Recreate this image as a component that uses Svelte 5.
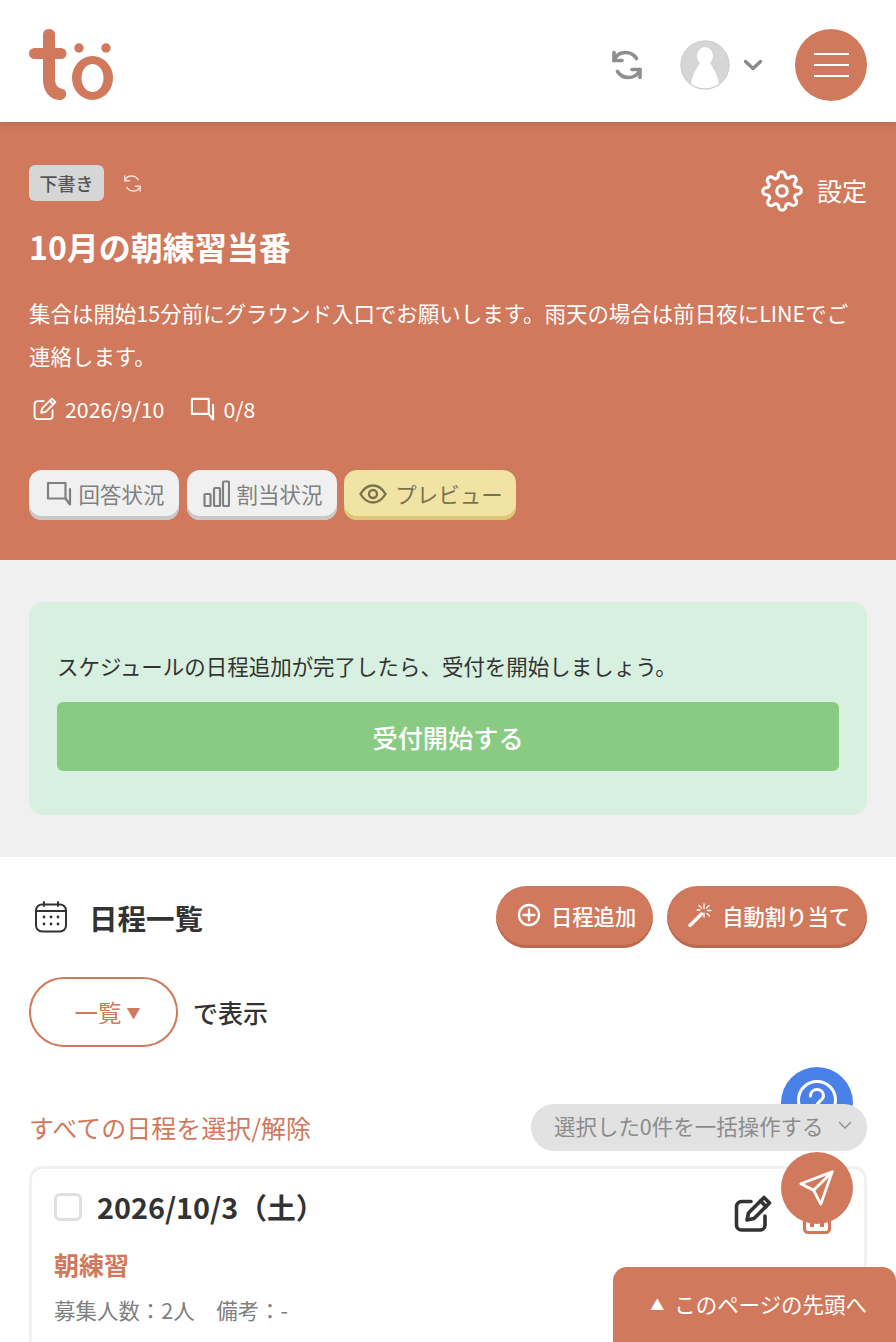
<script>
  const stats = [
    { label: '回答状況', icon: 'chat', kind: '' },
    { label: '割当状況', icon: 'bars', kind: '' },
    { label: 'プレビュー', icon: 'eye', kind: 'yellow' },
  ];
</script>

{#snippet syncIcon(size, color, sw)}
  <svg width={size} height={size} viewBox="0 0 32 32" fill="none" stroke={color} stroke-width={sw} stroke-linecap="round" stroke-linejoin="round">
    <path d="M3 11.5C5 6 9.5 3.5 14.5 3.5c4.5 0 8.5 2 11 6" />
    <path d="M3 3.5v8h8" />
    <path d="M29 20.5C27 26 22.5 28.5 17.5 28.5c-4.5 0-8.5-2-11-6" />
    <path d="M29 28.5v-8h-8" />
  </svg>
{/snippet}

{#snippet chatIcon(size, color)}
  <svg width={size} height={size} viewBox="0 0 26 26" fill="none" stroke={color} stroke-width="2.2" stroke-linejoin="round" stroke-linecap="round">
    <path d="M2 2h17.5v15.5H2z" />
    <path d="M24 8v15.5l-4.5-6" />
  </svg>
{/snippet}

{#snippet editIcon(size, color, sw)}
  <svg width={size} height={size} viewBox="0 0 38 38" fill="none" stroke={color} stroke-width={sw} stroke-linecap="round" stroke-linejoin="round">
    <path d="M17 6.5H7.5a5 5 0 0 0-5 5V30a5 5 0 0 0 5 5H26a5 5 0 0 0 5-5V21" />
    <path d="M13 25l1.5-7L30 2.5l5.5 5.5L20 23.5z" />
    <path d="M26.5 6l5.5 5.5" />
  </svg>
{/snippet}

<div class="page">
  <header class="topbar">
    <svg class="logo" width="86" height="74" viewBox="0 0 86 74">
      <g fill="#d0795c">
        <path d="M20 0a6 5 0 0 1 6 5v14h6a5.5 5.5 0 0 1 0 11h-6v20c0 6 3 9 7.5 10 3 .7 4 3 3.5 6-.6 3.5-3 5-6.5 5C21 71 14 62 14 51V30H5.5a5.5 5.5 0 0 1 0-11H14V5a6 5 0 0 1 6-5z" />
        <circle cx="50" cy="19" r="4.7" />
        <circle cx="77" cy="19" r="4.7" />
        <path fill-rule="evenodd" d="M63.5 27a20.5 22 0 1 1 0 44 20.5 22 0 1 1 0-44zm0 8a11 14 0 1 0 0 28 11 14 0 1 0 0-28z" />
      </g>
    </svg>
    <div class="top-actions">
      <span class="top-sync">{@render syncIcon(32, '#8e8e8e', 3.6)}</span>
      <div class="avatar">
        <svg width="50" height="50" viewBox="0 0 50 50">
          <circle cx="25" cy="25" r="24.5" fill="#d6d6d6" />
          <ellipse cx="25" cy="16" rx="8" ry="9" fill="#fff" />
          <path d="M20 23c-3 5-8 12-9 21 4 3 9 4.5 14 4.5S35 47 39 44c-1-9-6-16-9-21z" fill="#fff" />
          <circle cx="25" cy="25" r="24" fill="none" stroke="#cdcdcd" />
        </svg>
      </div>
      <svg class="caret" width="20" height="14" viewBox="0 0 20 14" fill="none" stroke="#8a8a8a" stroke-width="3.4" stroke-linecap="round" stroke-linejoin="round">
        <path d="M2.5 3.5l7.5 7 7.5-7" />
      </svg>
      <button class="menu" aria-label="メニュー">
        <span></span><span></span><span></span>
      </button>
    </div>
  </header>

  <section class="hero">
    <div class="hero-head">
      <div class="status">
        <span class="badge">下書き</span>
        {@render syncIcon(19, '#fbdcd0', 2.6)}
      </div>
      <div class="settings">
        <svg width="42" height="42" viewBox="0 0 24 24" fill="none" stroke="#fff" stroke-width="1.8" stroke-linecap="round" stroke-linejoin="round">
          <circle cx="12" cy="12" r="3" />
          <path d="M19.4 15a1.65 1.65 0 0 0 .33 1.82l.06.06a2 2 0 0 1-2.83 2.83l-.06-.06a1.65 1.65 0 0 0-2.8 1.17V21a2 2 0 0 1-4 0v-.09a1.65 1.65 0 0 0-2.8-1.11l-.06.06a2 2 0 0 1-2.83-2.83l.06-.06a1.65 1.65 0 0 0-1.17-2.8H3a2 2 0 0 1 0-4h.09a1.65 1.65 0 0 0 1.11-2.8l-.06-.06a2 2 0 0 1 2.83-2.83l.06.06a1.65 1.65 0 0 0 2.8-1.17V3a2 2 0 0 1 4 0v.09a1.65 1.65 0 0 0 2.8 1.11l.06-.06a2 2 0 0 1 2.83 2.83l-.06.06a1.65 1.65 0 0 0 1.17 2.8H21a2 2 0 0 1 0 4h-.09a1.65 1.65 0 0 0-1.51 1.17z" />
        </svg>
        <span>設定</span>
      </div>
    </div>
    <h1>10月の朝練習当番</h1>
    <p class="lead">集合は開始15分前にグラウンド入口でお願いします。雨天の場合は前日夜にLINEでご連絡します。</p>
    <div class="meta">
      <span class="meta-item">{@render editIcon(24, '#fff', 3)}2026/9/10</span>
      <span class="meta-item">{@render chatIcon(25, '#fff')}0/8</span>
    </div>
    <div class="tabs">
      {#each stats as s}
        <button class="tab {s.kind}">
          {#if s.icon === 'chat'}
            {@render chatIcon(26, '#808080')}
          {:else if s.icon === 'bars'}
            <svg width="27" height="27" viewBox="0 0 27 27" fill="none" stroke="#808080" stroke-width="2.2" stroke-linejoin="round">
              <rect x="1.5" y="14" width="6" height="12" rx="1" />
              <rect x="11" y="8" width="6" height="18" rx="1" />
              <rect x="20" y="1.5" width="6" height="24.5" rx="1" />
            </svg>
          {:else}
            <svg width="28" height="22" viewBox="0 0 28 22" fill="none" stroke="#7a7350" stroke-width="2.4">
              <path d="M1.5 11C5 5 9 2.5 14 2.5S23 5 26.5 11C23 17 19 19.5 14 19.5S5 17 1.5 11z" />
              <circle cx="14" cy="11" r="4" />
            </svg>
          {/if}
          <span>{s.label}</span>
        </button>
      {/each}
    </div>
  </section>

  <section class="notice-wrap">
    <div class="notice">
      <p>スケジュールの日程追加が完了したら、受付を開始しましょう。</p>
      <button class="start">受付開始する</button>
    </div>
  </section>

  <section class="schedule">
    <div class="schedule-head">
      <h2>
        <svg width="34" height="34" viewBox="0 0 34 34" fill="none" stroke="#333" stroke-width="2" stroke-linecap="round">
          <rect x="2" y="4.5" width="30" height="27" rx="6" />
          <path d="M2 11h30M10 2v4M24 2v4" />
          <g fill="#333" stroke="none">
            <circle cx="10" cy="17" r="1.4" /><circle cx="17" cy="17" r="1.4" /><circle cx="24" cy="17" r="1.4" />
            <circle cx="10" cy="24" r="1.4" /><circle cx="17" cy="24" r="1.4" /><circle cx="24" cy="24" r="1.4" />
          </g>
        </svg>
        <span>日程一覧</span>
      </h2>
      <div class="head-actions">
        <button class="pill">
          <svg width="24" height="24" viewBox="0 0 24 24" fill="none" stroke="#fff" stroke-width="2.3" stroke-linecap="round">
            <circle cx="12" cy="12" r="10" /><path d="M12 6.5v11M6.5 12h11" />
          </svg>
          日程追加
        </button>
        <button class="pill">
          <svg width="24" height="24" viewBox="0 0 24 24" fill="none" stroke="#fff" stroke-linecap="round">
            <path d="M2 22.5L13.5 11" stroke-width="3.4" />
            <path d="M16 1v4.5M16 10v4M9 7l3 0M19.5 7.5h3.5M11 2.5l2.5 2.5M21 2.5l-2.5 2.5M19 10.5l2.5 2.5" stroke-width="1.3" />
          </svg>
          自動割り当て
        </button>
      </div>
    </div>

    <div class="view-row">
      <div class="view-select">一覧<span class="tri">▼</span></div>
      <span class="view-label">で表示</span>
    </div>

    <div class="select-row">
      <span class="select-all">すべての日程を選択/解除</span>
      <button class="bulk">
        選択した0件を一括操作する
        <svg width="14" height="9" viewBox="0 0 14 9" fill="none" stroke="#8c8c8c" stroke-width="1.3" stroke-linecap="round">
          <path d="M1.5 1.5L7 7l5.5-5.5" />
        </svg>
      </button>
    </div>

    <article class="day">
      <div class="day-head">
        <span class="check"></span>
        <strong>2026/10/3（土）</strong>
        <span class="day-actions">
          {@render editIcon(38, '#333', 3.6)}
          <svg width="30" height="40" viewBox="0 0 30 40" fill="none" stroke="#d0795c" stroke-width="3.2" stroke-linejoin="round">
            <path d="M1.5 8h27M2.5 8v27a3.5 3.5 0 0 0 3.5 3.5h18a3.5 3.5 0 0 0 3.5-3.5V8" />
            <path d="M10 14v19M20 14v19" stroke-width="4" />
          </svg>
        </span>
      </div>
      <div class="day-name">朝練習</div>
      <div class="day-info">募集人数：2人　備考：-</div>
    </article>
  </section>

  <button class="float help" aria-label="ヘルプ">
    <svg width="42" height="42" viewBox="0 0 42 42" fill="none" stroke="#fff" stroke-width="3" stroke-linecap="round">
      <circle cx="21" cy="21" r="18.5" />
      <path d="M14.5 17c0-4 3-6.5 6.5-6.5s6.5 2.5 6.5 6c0 5.500-6.500 5.500-6.500 10.500" />
    </svg>
  </button>
  <button class="bulk-layer" tabindex="-1">
    選択した0件を一括操作する
    <svg width="14" height="9" viewBox="0 0 14 9" fill="none" stroke="#8c8c8c" stroke-width="1.3" stroke-linecap="round">
      <path d="M1.5 1.5L7 7l5.5-5.5" />
    </svg>
  </button>
  <button class="float send" aria-label="送信">
    <svg width="36" height="36" viewBox="0 0 38 38" fill="none" stroke="#fff" stroke-width="3" stroke-linejoin="round" stroke-linecap="round">
      <path d="M35 2L2 14.5l13.5 7L23 36z" />
      <path d="M35 2L15.5 21.5" />
    </svg>
  </button>
  <button class="to-top"><span class="up">▲</span>このページの先頭へ</button>
</div>

<style>
  :global(body) {
    margin: 0;
    background: #fff;
  }

  .page {
    position: relative;
    height: 1342px;
    overflow: hidden;
    color: #333;
    font-family: "Noto Sans CJK JP", "Noto Sans", sans-serif;
  }

  button {
    font-family: inherit;
    border: 0;
    margin: 0;
    padding: 0;
  }

  h1, h2, p {
    margin: 0;
  }

  .topbar {
    height: 122px;
    box-sizing: border-box;
    padding: 0 29px;
    display: flex;
    align-items: center;
    justify-content: space-between;
    background: #fff;
    position: relative;
    box-shadow: 0 2px 6px rgba(90, 50, 30, 0.22);
    z-index: 1;
  }

  .logo {
    margin-top: 10px;
  }

  .top-actions {
    display: flex;
    align-items: center;
    margin-top: 8px;
  }

  .top-sync {
    display: flex;
    margin-right: 37px;
  }

  .avatar {
    display: flex;
    margin-right: 13px;
  }

  .caret {
    margin-right: 32px;
  }

  .menu {
    width: 72px;
    height: 72px;
    border-radius: 50%;
    background: #d0795c;
    display: flex;
    flex-direction: column;
    align-items: center;
    justify-content: center;
    gap: 9px;
  }

  .menu span {
    display: block;
    width: 35px;
    height: 2px;
    background: #fff;
  }

  .hero {
    height: 438px;
    box-sizing: border-box;
    padding: 43px 29px 0;
    background: #d0795c;
    color: #fff;
  }

  .hero-head {
    display: flex;
    justify-content: space-between;
    align-items: flex-start;
  }

  .status {
    display: flex;
    align-items: center;
    gap: 19px;
  }

  .badge {
    width: 75px;
    height: 36px;
    display: flex;
    align-items: center;
    justify-content: center;
    border-radius: 6px;
    background: #d6d6d6;
    color: #555;
    font-size: 18px;
    font-weight: 500;
  }

  .settings {
    display: flex;
    align-items: center;
    gap: 14px;
    font-size: 25px;
    margin-top: 3px;
  }

  .settings svg {
    margin-top: 2px;
    margin-left: -1px;
  }

  h1 {
    margin-top: 12px;
    font-size: 32px;
    line-height: 44px;
    font-weight: 700;
  }

  .lead {
    margin-top: 23px;
    font-size: 21.47px;
    line-height: 43px;
  }

  .meta {
    display: flex;
    gap: 26px;
    margin-top: 16px;
    margin-left: 4px;
    font-size: 21.3px;
    line-height: 32px;
  }

  .meta-item {
    display: flex;
    align-items: center;
    gap: 8px;
  }

  .tabs {
    display: flex;
    gap: 7.5px;
    margin-top: 45px;
  }

  .tab {
    height: 50px;
    width: 150px;
    box-sizing: border-box;
    padding: 0 0 3px 2px;
    display: flex;
    align-items: center;
    justify-content: center;
    gap: 7px;
    border-radius: 13px;
    background: #f0f0f0;
    box-shadow: inset 0 -4px 0 #c8c8c8;
    color: #808080;
    font-size: 21.47px;
  }

  .tab.yellow {
    width: 172px;
    gap: 8px;
    background: #f1e3a4;
    box-shadow: inset 0 -4px 0 #dcc778;
    color: #7a7350;
  }

  .notice-wrap {
    height: 297px;
    box-sizing: border-box;
    padding: 42px 29px 0;
    background: #f0f0f0;
  }

  .notice {
    height: 213px;
    box-sizing: border-box;
    padding: 44px 28px 0;
    border-radius: 14px;
    background: #d8f0df;
  }

  .notice p {
    font-size: 21.47px;
    line-height: 40px;
    color: #333;
  }

  .start {
    display: block;
    width: 100%;
    height: 69px;
    margin-top: 16px;
    border-radius: 6px;
    background: #89cb83;
    color: #fff;
    font-size: 25.2px;
    font-weight: 500;
  }

  .schedule {
    padding: 29px 29px 0;
    background: #fff;
  }

  .schedule-head {
    display: flex;
    justify-content: space-between;
    align-items: center;
    height: 62px;
  }

  h2 {
    display: flex;
    align-items: center;
    gap: 21px;
    padding-left: 5px;
    font-size: 28.5px;
    font-weight: 700;
  }

  .head-actions {
    display: flex;
    gap: 14px;
  }

  .pill {
    height: 62px;
    padding: 0 17px 4px 21px;
    box-sizing: border-box;
    display: flex;
    align-items: center;
    gap: 10px;
    border-radius: 31px;
    background: #d0795c;
    box-shadow: inset 0 -3px 0 #bc6a4e;
    color: #fff;
    font-size: 21.3px;
    font-weight: 500;
  }

  .view-row {
    display: flex;
    align-items: center;
    gap: 15px;
    margin-top: 29px;
  }

  .view-select {
    width: 149px;
    height: 70px;
    box-sizing: border-box;
    padding-left: 8px;
    display: flex;
    align-items: center;
    justify-content: center;
    gap: 5px;
    border: 2px solid #d0795c;
    border-radius: 35px;
    color: #d0795c;
    font-size: 23.5px;
  }

  .tri {
    font-size: 14px;
  }

  .view-label {
    font-size: 25px;
    font-weight: 500;
  }

  .select-row {
    display: flex;
    justify-content: space-between;
    align-items: center;
    margin-top: 58px;
    height: 46px;
  }

  .select-all {
    color: #d0795c;
    font-size: 25px;
    padding-bottom: 3px;
  }

  .bulk, .bulk-layer {
    width: 336px;
    height: 46px;
    box-sizing: border-box;
    padding: 0 0 3px 23px;
    display: flex;
    align-items: center;
    gap: 14px;
    border-radius: 23px;
    background: #e2e2e2;
    color: #8c8c8c;
    font-size: 21.47px;
  }

  .bulk-layer {
    position: absolute;
    top: 1104px;
    left: 531px;
    z-index: 3;
  }

  .day {
    margin-top: 15px;
    height: 240px;
    box-sizing: border-box;
    padding: 16px 22px;
    border: 3px solid #f0f0f0;
    border-radius: 14px;
  }

  .day-head {
    display: flex;
    align-items: center;
    height: 44px;
  }

  .check {
    width: 28px;
    height: 28px;
    box-sizing: border-box;
    border: 3px solid #e0e0e0;
    border-radius: 6px;
    margin-right: 15px;
  }

  .day-head strong {
    font-size: 28.8px;
    font-weight: 700;
    padding-bottom: 2px;
  }

  .day-actions {
    margin-left: auto;
    margin-right: 10px;
    display: flex;
    align-items: center;
    gap: 30px;
    padding-top: 14px;
  }

  .day-name {
    margin-top: 17px;
    color: #d0795c;
    font-size: 25px;
    line-height: 36px;
    font-weight: 700;
  }

  .day-info {
    margin-top: 13px;
    color: #808080;
    font-size: 21.47px;
    line-height: 30px;
  }

  .float {
    position: absolute;
    left: 781px;
    width: 72px;
    height: 72px;
    border-radius: 50%;
    display: flex;
    align-items: center;
    justify-content: center;
  }

  .help {
    top: 1067px;
    padding-bottom: 6px;
    z-index: 2;
    background: #4a81e8;
  }

  .send {
    top: 1152px;
    z-index: 4;
    background: #d0795c;
  }

  .to-top {
    position: absolute;
    left: 613px;
    top: 1267px;
    width: 283px;
    height: 75px;
    padding-bottom: 2px;
    box-sizing: border-box;
    display: flex;
    align-items: center;
    justify-content: flex-end;
    padding-right: 29px;
    border-radius: 14px 14px 0 0;
    background: #d0795c;
    color: #fff;
    font-size: 21.47px;
    z-index: 4;
  }

  .up {
    font-size: 14px;
    margin-right: 10px;
  }
</style>
